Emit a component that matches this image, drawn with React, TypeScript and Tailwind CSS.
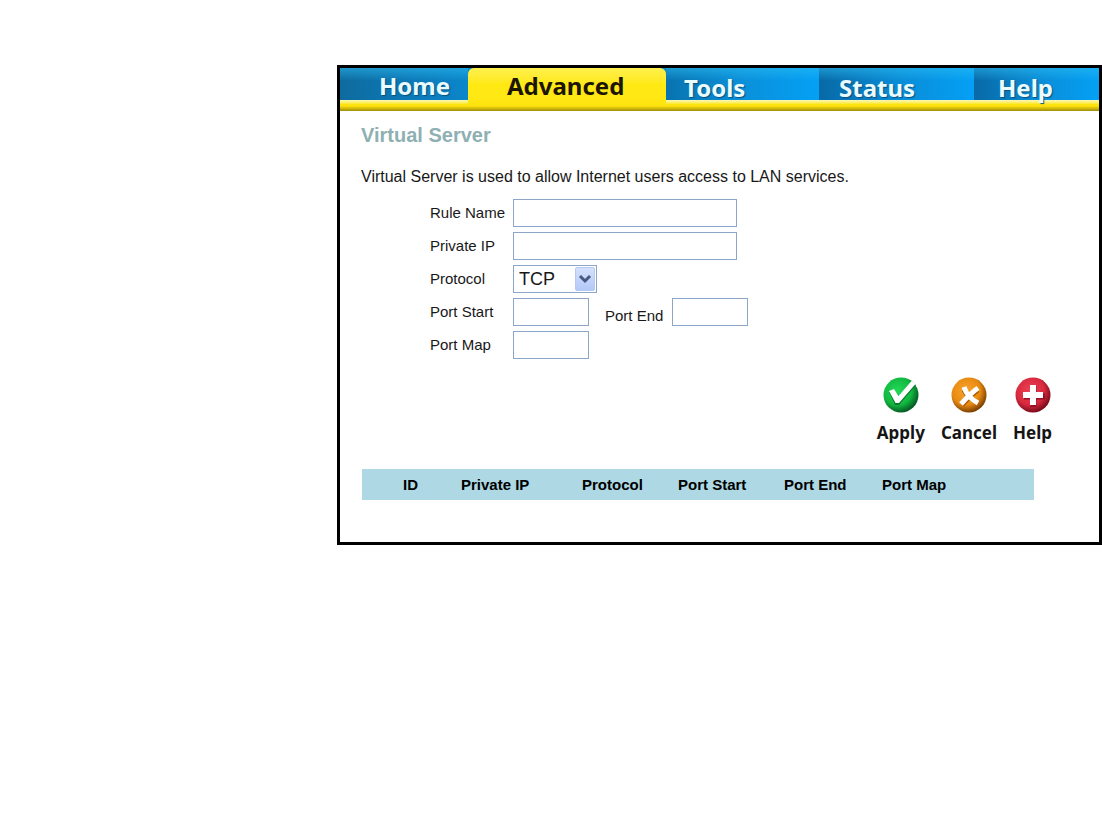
import { clsx } from "clsx";

const tabs = [
  { name: "Home", className: "bg-gradient-to-r from-[#0e6b9f] to-[#0a86cb] pl-[39px] pt-1 text-[#e9fbff]" },
  { name: "Advanced", className: "pl-[39px] pt-1 text-[#1c1502]" },
  { name: "Tools", className: "bg-gradient-to-r from-[#0873b0] via-[#0a90da] to-[#04a0f5] pl-[18px] pt-2 text-[#e9fbff]" },
  { name: "Status", className: "bg-gradient-to-r from-[#0869a6] via-[#0a8cd6] to-[#04a0f5] pl-[20px] pt-2 text-[#e9fbff]" },
  { name: "Help", className: "bg-gradient-to-r from-[#0869a6] via-[#0a8cd6] to-[#04a0f5] pl-[24px] pt-2 text-[#e9fbff]" },
];

const columns = [
  { name: "ID", width: "w-[99px] pl-[41px]" },
  { name: "Private IP", width: "w-[121px]" },
  { name: "Protocol", width: "w-[96px]" },
  { name: "Port Start", width: "w-[106px]" },
  { name: "Port End", width: "w-[98px]" },
  { name: "Port Map", width: "" },
];

const inputClass = "h-7 border border-[#8ba6c6] bg-white px-1 outline-none";

const TabBar = () => (
  <nav className="bg-[#ffe713]">
    <div className="grid h-8 grid-cols-[128fr_198fr_153fr_155fr_125fr] bg-[#0a86cb]">
      {tabs.map((tab) => (
        <a
          key={tab.name}
          href="#"
          className={clsx(
            "relative flex h-8 items-center font-['Noto_Sans',sans-serif] text-2xl leading-8 font-bold",
            tab.className,
            tab.name === "Advanced"
              ? "rounded-t-md bg-gradient-to-b from-[#fff04a] via-[#ffe913] to-[#ffe713]"
              : "[text-shadow:1px_1px_1px_#07507c]"
          )}
        >
          {tab.name !== "Advanced" && (
            <span className="absolute inset-0 bg-gradient-to-b from-[#2fc0f4]/50 via-transparent via-40% to-transparent" />
          )}
          <span className="relative">{tab.name}</span>
        </a>
      ))}
    </div>
    {/* Gold strip under the tabs */}
    <div className="grid h-[11px] grid-cols-[128fr_198fr_433fr] bg-gradient-to-b from-[#ffe713] via-[#ffe20c] via-55% to-[#a18d0a]">
      <div className="h-1 bg-gradient-to-b from-[#fbf9b0] to-[#ffe713]" />
      <div />
      <div className="h-1 bg-gradient-to-b from-[#fbf9b0] to-[#ffe713]" />
    </div>
  </nav>
);

const ApplyIcon = () => (
  <svg className="size-9" viewBox="0 0 36 36" aria-hidden="true">
    <defs>
      <radialGradient id="green" cx="40%" cy="38%" r="62%">
        <stop offset="0" stopColor="#22d957" />
        <stop offset="0.65" stopColor="#12b83f" />
        <stop offset="1" stopColor="#075f27" />
      </radialGradient>
    </defs>
    <circle cx="18" cy="18" r="17.5" fill="url(#green)" />
    <path d="M6 15 L11 13 L16 19 L29 5 L33 8 L16 28 L12 28 Z" fill="#0a7a2c" />
    <path d="M6 14 L11 12 L15.500 19 L28.500 4 L32.500 7 L16 26 L12.500 26 Z" fill="#fff" />
  </svg>
);

const CancelIcon = () => (
  <svg className="size-9" viewBox="0 0 36 36" aria-hidden="true">
    <defs>
      <radialGradient id="orange" cx="42%" cy="38%" r="62%">
        <stop offset="0" stopColor="#f9a42c" />
        <stop offset="0.65" stopColor="#e88a12" />
        <stop offset="1" stopColor="#7c4104" />
      </radialGradient>
    </defs>
    <circle cx="18" cy="18" r="17.500" fill="url(#orange)" />
    <path d="M13 13 Q16 20 27 26 M27 13 Q21 17 11 28" fill="none" stroke="#a85b06" strokeWidth="5" />
    <path d="M13 10 Q16 20 27 26 M27 11 Q20 16 10 27" fill="none" stroke="#fff" strokeWidth="5" />
  </svg>
);

const HelpIcon = () => (
  <svg className="size-9" viewBox="0 0 36 36" aria-hidden="true">
    <defs>
      <radialGradient id="red" cx="42%" cy="38%" r="62%">
        <stop offset="0" stopColor="#ee4256" />
        <stop offset="0.65" stopColor="#d8293f" />
        <stop offset="1" stopColor="#7a0c1c" />
      </radialGradient>
    </defs>
    <circle cx="18" cy="18" r="17.500" fill="url(#red)" />
    <path d="M18.500 9 V30 M9 19.500 H30" stroke="#951226" strokeWidth="6" />
    <path d="M18 8 V28 M8 18 H28" stroke="#fff" strokeWidth="6" />
  </svg>
);

const actions = [
  { name: "Apply", icon: ApplyIcon },
  { name: "Cancel", icon: CancelIcon },
  { name: "Help", icon: HelpIcon },
];

const App = () => {
  return (
    <div className="bg-white pt-[65px] pl-[337px] font-['Liberation_Sans',Arial,sans-serif] text-[15px] leading-5 text-[#181818]">
      <main className="border-[3px] border-black pb-[42px]">
        <TabBar />

        <div className="px-[21px] pt-3">
          <h1 className="text-xl leading-6 font-bold text-[#8fb0b2]">Virtual Server</h1>
          <p className="mt-5 text-base leading-5">
            Virtual Server is used to allow Internet users access to LAN services.
          </p>
        </div>

        <form onSubmit={(e) => e.preventDefault()}>
          <div className="mt-3 grid grid-cols-[83px_1fr] items-center gap-y-[5px] pl-[90px]">
            <label htmlFor="rule">Rule Name</label>
            <input id="rule" type="text" className={clsx(inputClass, "w-56")} />

            <label htmlFor="ip">Private IP</label>
            <input id="ip" type="text" className={clsx(inputClass, "w-56")} />

            <label htmlFor="protocol">Protocol</label>
            <div className="relative w-[84px]">
              <select
                id="protocol"
                className="block h-7 w-full appearance-none border border-[#8ba6c6] bg-white pl-[5px] text-lg leading-6 outline-none"
              >
                <option>TCP</option>
                <option>UDP</option>
              </select>
              <svg
                className="pointer-events-none absolute top-0.5 right-0.5 h-6 w-5"
                viewBox="0 0 20 24"
                aria-hidden="true"
              >
                <defs>
                  <linearGradient id="arrow" x1="0" y1="0" x2="0" y2="1">
                    <stop offset="0" stopColor="#d5e1fd" />
                    <stop offset="1" stopColor="#b3c8f8" />
                  </linearGradient>
                </defs>
                <rect x="0.500" y="0.500" width="19" height="23" rx="1.500" fill="url(#arrow)" stroke="#b5c9f3" />
                <path d="M5 9 L10 14 L15 9" fill="none" stroke="#46597f" strokeWidth="3" />
              </svg>
            </div>

            <label htmlFor="start">Port Start</label>
            <div className="flex items-end">
              <input id="start" type="text" className={clsx(inputClass, "w-[76px]")} />
              <label htmlFor="end" className="ml-4 w-[67px]">
                Port End
              </label>
              <input id="end" type="text" className={clsx(inputClass, "w-[76px]")} />
            </div>

            <label htmlFor="map">Port Map</label>
            <input id="map" type="text" className={clsx(inputClass, "w-[76px]")} />
          </div>

          <div className="mt-[18px] flex justify-end gap-4 pr-[47px]">
            {actions.map((action) => (
              <button
                key={action.name}
                type="button"
                className="flex flex-col items-center gap-2 font-['Noto_Sans',sans-serif] text-[17px] leading-6 font-bold text-[#151515]"
              >
                <action.icon />
                {action.name}
              </button>
            ))}
          </div>
        </form>

        <div className="mt-6 pr-[65px] pl-[22px]">
          <table className="w-full table-fixed bg-[#add8e4] text-left text-black">
            <thead>
              <tr className="h-[31px]">
                {columns.map((column) => (
                  <th key={column.name} scope="col" className={clsx("p-0 font-bold", column.width)}>
                    {column.name}
                  </th>
                ))}
              </tr>
            </thead>
          </table>
        </div>
      </main>
    </div>
  );
};

export default App;
